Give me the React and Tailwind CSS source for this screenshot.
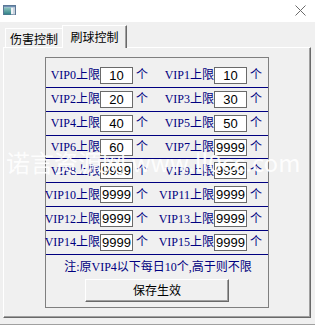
import React from "react";

const rows = [
  ["VIP0上限", "10", "VIP1上限", "10"],
  ["VIP2上限", "20", "VIP3上限", "30"],
  ["VIP4上限", "40", "VIP5上限", "50"],
  ["VIP6上限", "60", "VIP7上限", "9999"],
  ["VIP8上限", "9999", "VIP9上限", "9999"],
  ["VIP10上限", "9999", "VIP11上限", "9999"],
  ["VIP12上限", "9999", "VIP13上限", "9999"],
  ["VIP14上限", "9999", "VIP15上限", "9999"],
];

function Input({ value }) {
  return (
    <div className="w-[33px] h-[17px] shrink-0 bg-white border border-[#6a6a6a] flex items-center justify-center font-['Liberation_Sans'] text-[13px] leading-none text-black">
      {value}
    </div>
  );
}

function Row({ r }) {
  return (
    <div className="flex items-center h-[23.86px] border-b border-[#000080] shrink-0">
      <div className="w-[54px] shrink-0 flex justify-end whitespace-nowrap">{r[0]}</div>
      <Input value={r[1]} />
      <span className="ml-[3px] w-[12px] shrink-0">个</span>
      <div className="w-[66px] shrink-0 flex justify-end whitespace-nowrap">{r[2]}</div>
      <Input value={r[3]} />
      <span className="ml-[3px] w-[12px] shrink-0">个</span>
    </div>
  );
}

export default function App() {
  return (
    <div className="relative w-[315px] h-[325px] bg-[#f0f0f0] flex flex-col border-b border-[#a0a0a0] overflow-hidden font-['Noto_Sans_CJK_SC',sans-serif]">
      {/* title bar */}
      <div className="h-[22px] bg-white flex items-start justify-between shrink-0">
        <svg className="ml-[3px] mt-[5px]" width="13" height="10" viewBox="0 0 13 10">
          <defs>
            <linearGradient id="g" x1="0" y1="0" x2="0" y2="1">
              <stop offset="0" stopColor="#8fc6c0" />
              <stop offset="1" stopColor="#2f7f86" />
            </linearGradient>
          </defs>
          <rect x="0.5" y="0.5" width="12" height="9" fill="#dfe6ee" stroke="#5c7896" />
          <rect x="1" y="1" width="11" height="1.5" fill="#6f8fb3" />
          <rect x="1" y="2.5" width="7" height="7" fill="url(#g)" />
          <rect x="8.5" y="2.5" width="1" height="7" fill="#ffffff" />
          <rect x="10" y="2.5" width="2" height="7" fill="#c9d3de" />
        </svg>
        <svg className="mr-[9px] mt-[5px]" width="11" height="11" viewBox="0 0 11 11">
          <path d="M0.5 0.5 L10.5 10.5 M10.5 0.5 L0.5 10.5" stroke="#6b6b6b" strokeWidth="1" fill="none" />
        </svg>
      </div>

      {/* tabs */}
      <div className="h-[25px] flex items-end pl-[5px] shrink-0 relative z-10 text-[12px] text-black">
        <div className="w-[57px] h-[19px] border-t border-l border-white flex items-center justify-center pt-[1px] whitespace-nowrap">
          伤害控制
        </div>
        <div className="w-[65px] h-[23px] -mb-[1px] bg-[#f0f0f0] border-t border-l border-white border-r border-r-[#696969] shadow-[inset_-1px_0_0_#a0a0a0] flex items-center justify-center whitespace-nowrap">
          刷球控制
        </div>
      </div>

      {/* panel */}
      <div className="ml-[3px] w-[308px] h-[271px] shrink-0 border-t border-l border-white border-r border-b border-r-[#696969] border-b-[#696969] shadow-[inset_-1px_-1px_0_#a0a0a0] pl-[41px] pt-[9px]">
        <div className="w-[224px] h-[251px] border border-[#7f7f7f] flex flex-col pt-[6px] text-[12px] leading-none text-[#000080] font-['Liberation_Serif','Noto_Sans_CJK_SC',serif]">
          {rows.map((r, i) => (
            <Row key={i} r={r} />
          ))}
          <div className="h-[24px] shrink-0 flex items-center justify-center whitespace-nowrap pl-[2px]">
            注:原VIP4以下每日10个,高于则不限
          </div>
          <div className="flex justify-center">
            <div className="w-[144px] h-[23px] bg-[#f0f0f0] border-t border-l border-white border-r border-b border-r-[#696969] border-b-[#696969] shadow-[inset_-1px_-1px_0_#a0a0a0] flex items-center justify-center text-black font-['Noto_Sans_CJK_SC',sans-serif] text-[12px]">
              保存生效
            </div>
          </div>
        </div>
      </div>

      {/* watermark */}
      <div className="absolute left-[6px] top-[150px] text-[24px] leading-none text-white opacity-90 whitespace-nowrap pointer-events-none font-['Noto_Sans_CJK_SC',sans-serif]">
        诺言资源网 www.ll0cc.com
      </div>
    </div>
  );
}
